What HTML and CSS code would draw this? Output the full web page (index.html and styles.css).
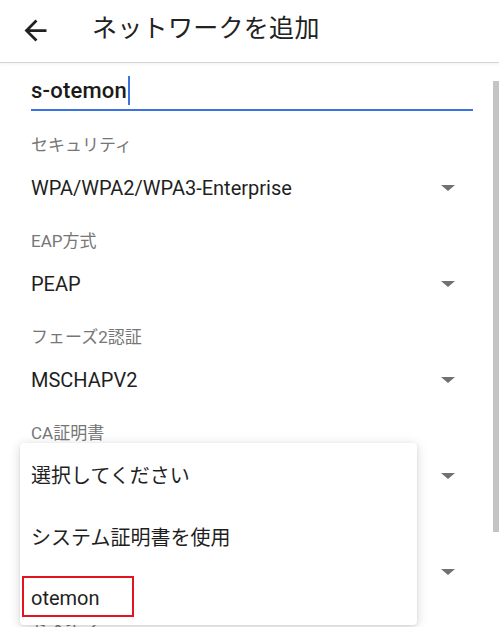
FILE: index.html
```html
<!DOCTYPE html>
<html lang="ja">
<head>
<meta charset="utf-8">
<link rel="stylesheet" href="styles.css">
</head>
<body>
<div class="screen">
  <header class="header">
    <svg class="back" viewBox="0 0 24 24" width="33" height="33"><path d="M20 11H7.83l5.59-5.59L12 4l-8 8 8 8 1.41-1.41L7.83 13H20v-2z" fill="#212121"/></svg>
    <h1 class="title">ネットワークを追加</h1>
  </header>
  <main class="content">
    <div class="ssid"><span class="ssid-text">s-otemon</span><span class="cursor"></span></div>
    <section class="field">
      <div class="label">セキュリティ</div>
      <div class="value"><span>WPA/WPA2/WPA3-Enterprise</span><span class="tri"></span></div>
    </section>
    <section class="field">
      <div class="label">EAP方式</div>
      <div class="value"><span>PEAP</span><span class="tri"></span></div>
    </section>
    <section class="field">
      <div class="label">フェーズ2認証</div>
      <div class="value"><span>MSCHAPV2</span><span class="tri"></span></div>
    </section>
    <section class="field">
      <div class="label">CA証明書</div>
      <div class="value"><span></span><span class="tri"></span></div>
    </section>
    <section class="field">
      <div class="label"></div>
      <div class="value"><span></span><span class="tri"></span></div>
    </section>
    <section class="field">
      <div class="label">ドメイン</div>
    </section>
  </main>
  <div class="scrollbar"></div>
  <ul class="menu">
    <li class="item">選択してください</li>
    <li class="item">システム証明書を使用</li>
    <li class="item selected">otemon<span class="mark"></span></li>
  </ul>
</div>
</body>
</html>
```
FILE: styles.css
```css
html, body {
  margin: 0;
  padding: 0;
  background: #fff;
}
.screen {
  position: relative;
  width: 499px;
  height: 627px;
  overflow: hidden;
  font-family: Roboto, "Noto Sans CJK JP", sans-serif;
  color: #212121;
}
.header {
  height: 62px;
  display: flex;
  align-items: center;
  border-bottom: 1px solid #d6d6d6;
  box-shadow: 0 1px 3px rgba(0,0,0,0.06);
}
.back {
  margin-left: 19px;
  margin-top: -2px;
  flex: none;
}
.title {
  margin: 0 0 0 40px;
  font-size: 25px;
  font-weight: 400;
  color: #222;
  letter-spacing: 0.3px;
  line-height: 30px;
  margin-top: -4px;
}
.content {
  padding: 12px 26px 0 31px;
}
.ssid {
  display: flex;
  align-items: center;
  height: 30px;
  padding-bottom: 4px;
  border-bottom: 2px solid #3b73e0;
}
.ssid-text {
  font-size: 22px;
  font-weight: 500;
  color: #1a1a1a;
  letter-spacing: 0.2px;
}
.cursor {
  width: 2px;
  height: 29px;
  background: #3b73e0;
  margin-left: 1px;
}
.field {
  height: 96px;
}
.ssid + .field {
  margin-top: 22px;
}
.label {
  font-size: 17px;
  line-height: 24px;
  height: 24px;
  color: #767676;
}
.value {
  margin-top: 19px;
  height: 24px;
  display: flex;
  align-items: center;
  justify-content: space-between;
  font-size: 20px;
  color: #1f1f1f;
}
.tri {
  width: 0;
  height: 0;
  border-left: 7px solid transparent;
  border-right: 7px solid transparent;
  border-top: 6px solid #707070;
  margin-right: 18px;
}
.scrollbar {
  position: absolute;
  right: 0;
  top: 81px;
  width: 6px;
  height: 451px;
  background: #c4c4c4;
}
.menu {
  position: absolute;
  left: 20px;
  top: 443px;
  width: 397px;
  height: 182px;
  margin: 0;
  padding: 0;
  list-style: none;
  background: #fff;
  border-radius: 4px;
  box-shadow: 0 2px 12px rgba(0,0,0,0.16), 0 1px 3px rgba(0,0,0,0.08);
}
.item {
  position: relative;
  height: 62px;
  display: flex;
  align-items: center;
  padding-left: 11px;
  font-size: 20px;
  color: #1f1f1f;
}
.mark {
  position: absolute;
  left: 2px;
  top: 9px;
  width: 108px;
  height: 37px;
  border: 2px solid #e3141f;
}
```
